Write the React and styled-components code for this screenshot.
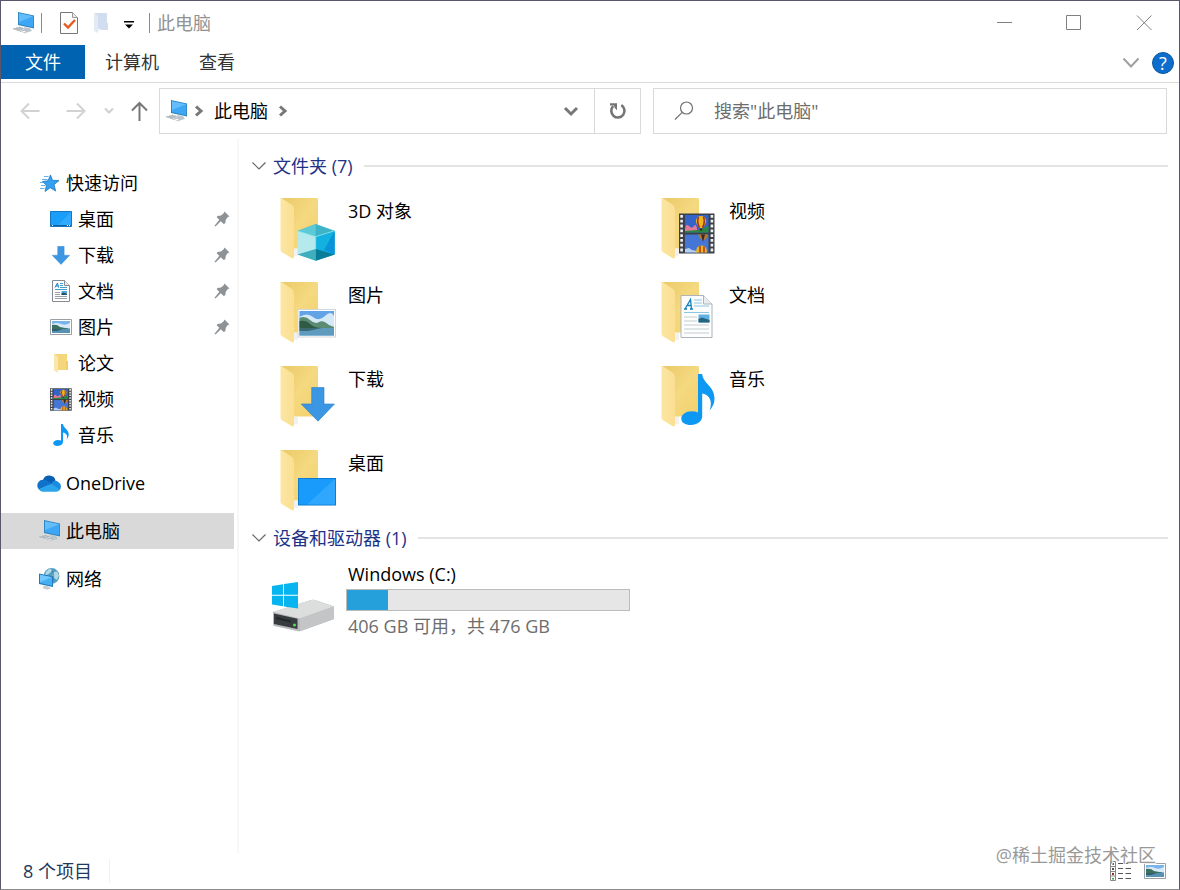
import React from "react";
import styled, { createGlobalStyle } from "styled-components";

const GlobalStyle = createGlobalStyle`
  *, *::before, *::after { box-sizing: border-box; }
  body {
    margin: 0;
    background: #fff;
    color: #000;
    font-family: "Open Sans", "Noto Sans CJK SC", sans-serif;
    font-size: 18px;
    line-height: 24px;
  }
  button, input { font: inherit; color: inherit; }
  svg { display: block; flex: none; }
`;

const Window = styled.div`
  position: relative;
  display: flex;
  flex-direction: column;
  min-height: 100vh;
  border: 1px solid #5b566c;
  border-bottom-color: #8a8a8a;
  background: #fff;
`;

const PlainButton = styled.button`
  display: flex;
  align-items: center;
  justify-content: center;
  padding: 0;
  border: 0;
  background: transparent;
`;

/* Title bar */
const TitleBar = styled.header`
  display: flex;
  align-items: center;
  height: 44px;
  padding-left: 10px;
`;
const TitleDivider = styled.span`
  width: 1px;
  height: 20px;
  background: #8c8c8c;
`;
const QuickDivider = styled(TitleDivider)`
  margin-left: 6px;
`;
const QuickTools = styled.div`
  display: flex;
  align-items: center;
  gap: 15px;
  margin: 0 15px 0 18px;
`;
const Title = styled.h1`
  flex: 1;
  margin: 0 0 0 7px;
  color: #929292;
  font-size: 18px;
  font-weight: 400;
`;
const CaptionButton = styled(PlainButton)`
  width: 70px;
  height: 44px;
`;

/* Ribbon tabs */
const Ribbon = styled.nav`
  display: flex;
  align-items: flex-start;
  height: 38px;
  border-bottom: 1px solid #dadbdc;
`;
const Tab = styled(PlainButton)`
  height: 34px;
  padding: 0 ${(p) => (p.$primary ? 24 : 20)}px;
  background: ${(p) => (p.$primary ? "#0063b1" : "transparent")};
  color: ${(p) => (p.$primary ? "#fff" : "#333")};
`;
const RibbonTools = styled.div`
  display: flex;
  align-items: center;
  gap: 12px;
  height: 36px;
  margin-left: auto;
  padding-right: 5px;
`;
const HelpButton = styled(PlainButton)`
  width: 22px;
  height: 22px;
  border: 1px solid #0a57a0;
  border-radius: 50%;
  background: #0c6dcd;
  color: #fff;
  line-height: 20px;
`;

/* Address row */
const AddressRow = styled.div`
  display: grid;
  grid-template-columns: 46px 46px 20px 40px minmax(0, 482fr) minmax(0, 526fr);
  height: 46px;
  margin: 5px 12px 0 6px;
`;
const AddressBox = styled.div`
  display: flex;
  border: 1px solid #d9d9d9;
`;
const Crumbs = styled.div`
  display: flex;
  flex: 1;
  align-items: center;
  padding-left: 4px;
`;
const Crumb = styled(PlainButton)`
  padding: 0 10px;
`;
const CrumbArrowWrap = styled.span`
  margin-left: 6px;
`;
const AddressButton = styled(PlainButton)`
  width: 46px;
  border-left: ${(p) => (p.$divided ? "1px solid #d9d9d9" : "0")};
`;
const SearchBox = styled.label`
  display: flex;
  align-items: center;
  gap: 20px;
  margin-left: 12px;
  padding-left: 20px;
  border: 1px solid #d9d9d9;
`;
const SearchInput = styled.input`
  flex: 1;
  min-width: 0;
  padding: 0;
  border: 0;
  outline: 0;
  background: transparent;
  &::placeholder { color: #6d6d6d; opacity: 1; }
`;

/* Body */
const Body = styled.div`
  display: flex;
  flex: 1;
  margin-top: 5px;
`;
const Sidebar = styled.nav`
  flex: none;
  width: 238px;
  padding: 26px 3px 0 0;
  border-right: 2px solid #f7f7f7;
`;
const NavGroup = styled.ul`
  margin: 0 0 12px;
  padding: 0;
  list-style: none;
`;
const NavRow = styled.a`
  display: flex;
  align-items: center;
  height: 36px;
  padding: 0 4px 0 ${(p) => (p.$child ? 48 : 36)}px;
  background: ${(p) => (p.$selected ? "#d9d9d9" : "transparent")};
  color: #000;
  text-decoration: none;
`;
const NavIcon = styled.span`
  display: flex;
  justify-content: center;
  width: 24px;
  margin-right: 5px;
`;
const NavLabel = styled.span`
  flex: 1;
`;

const Content = styled.main`
  flex: 1;
  min-width: 0;
  padding: 9px 11px 0 12px;
`;
const SectionHeader = styled.h2`
  display: flex;
  align-items: center;
  height: 36px;
  margin: 0;
  color: #1e3287;
  font-size: 18px;
  font-weight: 400;
  &::after {
    content: "";
    flex: 1;
    height: 2px;
    margin-left: 11px;
    background: #e4e4e4;
  }
`;
const Toggle = styled(PlainButton)`
  width: 16px;
  margin-right: 6px;
`;
const TileGrid = styled.div`
  display: grid;
  grid-template-columns: repeat(auto-fill, 381px);
  padding-left: 21px;
`;
const Tile = styled.a`
  display: flex;
  gap: 12px;
  height: 84px;
  padding-top: 12px;
  color: #000;
  text-decoration: none;
`;
const TileName = styled.span`
  padding-top: 3px;
`;
const DriveTile = styled.a`
  display: flex;
  gap: 10px;
  padding: 6px 0 0 21px;
  color: #000;
  text-decoration: none;
`;
const DriveInfo = styled.div`
  display: flex;
  flex-direction: column;
  gap: 3px;
  width: 284px;
`;
const DriveText = styled.span`
  padding-left: 2px;
  color: ${(p) => (p.$muted ? "#6d6d6d" : "#000")};
`;
const DriveArt = styled.span`
  padding-top: 20px;
`;
const Usage = styled.progress`
  display: block;
  width: 100%;
  height: 22px;
  border: 1px solid #bcbcbc;
  appearance: none;
  background: #e6e6e6;
  &::-webkit-progress-bar { background: #e6e6e6; }
  &::-webkit-progress-value { background: #26a0da; }
`;

/* Status bar */
const StatusBar = styled.footer`
  display: flex;
  align-items: center;
  height: 36px;
  padding: 0 13px 0 22px;
  color: #1e395b;
`;
const ItemCount = styled.span`
  padding-right: 17px;
  border-right: 1px solid #f0f0f0;
`;
const ViewButtons = styled.div`
  display: flex;
  gap: 12px;
  margin-left: auto;
`;
const Watermark = styled.span`
  position: absolute;
  right: 23px;
  bottom: 22px;
  color: #999;
  text-shadow: 1px 1px 1px #fff;
  pointer-events: none;
`;

/* Drawings */
const PcIcon = () => (
  <svg width="24" height="24" viewBox="0 0 24 24" aria-hidden="true">
    <path d="M7 1 23 4.500V17.500L7 14Z" fill="#2f86c0" />
    <path d="M8 2.300 22.200 5.300V16.200L8 13.100Z" fill="#3ea7f5" />
    <path d="M8 2.300 22.200 5.300 8 11Z" fill="#63bdfb" />
    <path d="M13 16 19 17.300 21 20 15 21.500 13.500 19Z" fill="#b9c4cb" />
    <path d="M1 17.500 9 15.800 17 18.500 9 21Z" fill="#e4e8ea" />
    <path d="M2 17.500 9 19.800M5 16.800 12 19.200M8 16.200 15 18.600M6 19 12 17M3 18.200 9 16.300M9 20.500 16 18.500" stroke="#a4afb5" strokeWidth=".8" fill="none" />
    <path d="M11 21.500 14 20.700 17 21.300 14 22.400Z" fill="#cbd2d6" />
  </svg>
);

const ScreenShapes = () => (
  <g>
    <path d="M26 30H64V57.500H26Z" fill="#0c7bd0" />
    <path d="M27 31H63V56.500H27Z" fill="#189bfb" />
    <path d="M63 31V56.500H35Z" fill="#3aacff" opacity=".7" />
  </g>
);
const ArrowShapes = () => (
  <path d="M39.700 23.500H52V40H62.500L46 57.200 29.200 40H39.700Z" fill="#3b96e4" stroke="#2c7cc7" strokeWidth=".6" />
);
const PictureShapes = () => (
  <g>
    <path d="M25.500 29H64V57.500H25.500Z" fill="#d3d7da" />
    <path d="M26.500 30H63V56.500H26.500Z" fill="#fff" />
    <path d="M27.500 31H62V55.500H27.500Z" fill="#62a2e6" />
    <path d="M27.500 37Q35 32 41 37T53 36T62 36V48H27.500Z" fill="#d5e8f6" />
    <path d="M27.500 38Q33 35.500 38 40T47 42T57 45L62 47V48H27.500Z" fill="#5b8b72" />
    <path d="M27.500 41Q34 40 38 44T50 48H27.500Z" fill="#2f5a44" />
    <path d="M27.500 48H62V55.500H27.500Z" fill="#5e9bbd" />
    <path d="M27.500 48H50L36 51H27.500Z" fill="#3b6a74" />
  </g>
);
const DocShapes = () => (
  <g>
    <path d="M28 15.500H50.500L59 24V57.500H28Z" fill="#fdfdfd" stroke="#aeb4b9" />
    <path d="M50.500 15.500V24H59" fill="#e9edf0" stroke="#aeb4b9" />
    <path d="M31 29H34M37 29H40M32 29 37.500 19.500 38.500 29M34 25.500H38" fill="none" stroke="#1380be" strokeWidth="1.300" />
    <path d="M41 20H49M41 23H49M41 26H56M31 32.500H56" stroke="#8cc6e4" />
    <path d="M31 37H44M31 41H44M31 45H56M31 49H56M31 53H56" stroke="#c3ccd1" />
    <path d="M45.500 34.500H56.500V42.500H45.500Z" fill="#62b1e5" />
    <path d="M45.500 39 49 37.500 56.500 40V42.500H45.500Z" fill="#26637c" />
  </g>
);
const Balloon = ({ x, y }) => (
  <g>
    <path d={`M${x - 5} ${y}a5 5 0 0 1 10 0q0 3-3.500 7h-3Q${x - 5} ${y + 3} ${x - 5} ${y}Z`} fill="#f2b51c" />
    <path d={`M${x - 2.5} ${y - 4}q-2 5 1 10.500M${x + 2.5} ${y - 4}q2 5-1 10.500`} stroke="#a3301c" strokeWidth="1.600" fill="none" />
    <path d={`M${x - 1.2} ${y + 7.500}h2.400v2h-2.400z`} fill="#372714" />
  </g>
);
const FilmShapes = () => (
  <g>
    <path d="M26 17.500H61.500V57.500H26Z" fill="#3d4047" />
    <path d="M28.600 19V57M58.900 19V57" stroke="#eff1f3" strokeWidth="2.600" strokeDasharray="2.800 2" />
    <path d="M32 19H55.500V36.500H32Z" fill="#3564c8" />
    <path d="M32 38.500H55.500V56.500H32Z" fill="#4576d6" />
    <path d="M32 33Q33 27 36 30T41 30 44 33V36H32Z" fill="#e27a9a" />
    <path d="M32 36.500V35L45 34 55.500 30V36.500Z" fill="#2b8642" />
    <path d="M32 56.500V53L36 52 39 54 44 55V56.500Z" fill="#b5cff3" />
    <Balloon x={48} y={25} />
    <path d="M45 38.500H55Q54 43 50 44.500 46 42 45 38.500Z" fill="#bd7720" />
    <path d="M48 38.500H52L50 46Z" fill="#322a2c" />
    <path d="M43 56.500Q43 49.500 48.500 49.500T54 56.500Z" fill="#f2b51c" />
    <path d="M47 56.500V50M51 56.500V50.500" stroke="#a3301c" strokeWidth="1.400" />
  </g>
);
const NoteShapes = () => (
  <path d="M45 10H49.200C49.500 19 61.500 22 61.500 34.500Q61.500 41 56.500 46.500 59.500 38 56 33.500 53.500 30 49.200 29.500V52C49.200 57.500 44 61 38 61 32 61 28.300 58.500 28.300 54.700 28.300 50.500 33 47.200 38.500 47.200Q43 47.200 45 48.500Z" fill="#0c98f3" />
);
const CubeShapes = () => (
  <g>
    <path d="M25.500 35 43.700 28 62.700 34.700 43.700 40.700Z" fill="#3db4c8" />
    <path d="M43.700 28V40.700L25.500 35Z" fill="#5cc9d6" />
    <path d="M25.500 35 43.700 40.700V64.700L25.500 58.500Z" fill="#b4e9ee" />
    <path d="M43.700 40.700 62.700 34.700V58.500L43.700 64.700Z" fill="#12b1e0" />
    <path d="M62.700 34.700V58.500L52 54Z" fill="#0a93d8" />
    <path d="M25.500 58.500 43.700 53V64.700Z" fill="#3eaebd" />
    <path d="M43.700 53 62.700 58.500 43.700 64.700Z" fill="#087d99" />
    <path d="M25.500 35 43.700 40.700 62.700 34.700M43.700 40.700V53" stroke="#8de6ef" strokeWidth=".7" fill="none" />
  </g>
);

const shapes = {
  cube: { Shapes: CubeShapes },
  film: { Shapes: FilmShapes, box: "26 17 36 41" },
  picture: { Shapes: PictureShapes },
  doc: { Shapes: DocShapes },
  arrow: { Shapes: ArrowShapes, box: "29 23 34 35" },
  note: { Shapes: NoteShapes, box: "28 10 34 51" },
  screen: { Shapes: ScreenShapes },
};

const SmallArt = ({ kind, width, height }) => {
  const { Shapes, box } = shapes[kind];
  return (
    <svg width={width} height={height} viewBox={box} preserveAspectRatio="none" aria-hidden="true">
      <Shapes />
    </svg>
  );
};
const SmallScreen = () => (
  <svg width="22" height="16" viewBox="0 0 22 16" aria-hidden="true">
    <path d="M.500.500H21.500V15.500H.500Z" fill="#1b9dfa" stroke="#1577c0" />
    <path d="M21 1V14H8Z" fill="#41b0ff" opacity=".6" />
    <path d="M1 14.500H21" stroke="#0f5f9e" />
    <path d="M2 14.500H3M17 14.500H18M19 14.500H20" stroke="#fff" />
  </svg>
);
const SmallDoc = () => (
  <svg width="18" height="22" viewBox="0 0 18 22" aria-hidden="true">
    <path d="M.500.500H12.500L17.500 5.500V21.500H.500Z" fill="#fff" stroke="#858b90" />
    <path d="M12.500.500V5.500H17.500" fill="#eee" stroke="#858b90" />
    <path d="M3 7.500 5.500 3 6.500 7.500M4 6H6.500" fill="none" stroke="#1380be" />
    <path d="M8 3.500H11M8 5.500H11M8 7.500H15M3 9.500H15" stroke="#3f9fd0" />
    <path d="M3 12.500H8M3 14.500H8M3 16.500H15M3 18.500H15" stroke="#9aa2a8" />
    <path d="M9.500 11H15V15H9.500Z" fill="#5aa9dc" />
    <path d="M9.500 13.500 11.500 12.500 15 14V15H9.500Z" fill="#1f4f6a" />
  </svg>
);
const SmallPicture = () => (
  <svg width="22" height="16" viewBox="0 0 22 16" aria-hidden="true">
    <path d="M.500.500H21.500V15.500H.500Z" fill="#fff" stroke="#9a9fa3" />
    <path d="M2 2H20V14H2Z" fill="#79b4ea" />
    <path d="M2 5Q7 3 11 5T20 4V9H2Z" fill="#d8eaf7" />
    <path d="M2 6Q7 5 10 8L18 9.500V10H2Z" fill="#3e7061" />
    <path d="M2 10H20V14H2Z" fill="#5792b4" />
    <path d="M2 10H13L7 12H2Z" fill="#2f5f6a" />
  </svg>
);

const FolderShapes = () => (
  <g>
    <path d="M9 2H45Q46 2 46 3V52.500H20Z" fill="url(#folderBack)" />
    <path d="M22 53H26V60H22Z" fill="#f1f1f1" />
    <path d="M8.500 2Q10 2 11 3L20 9Q22 10.500 22 13V61.500Q21 63 19.500 62L9.500 56Q8.500 55 8.500 54Z" fill="url(#folderFront)" />
  </g>
);
const FolderGradients = styled.svg`
  position: absolute;
`;
const FolderDefs = () => (
  <FolderGradients width="0" height="0" aria-hidden="true">
    <defs>
      <linearGradient id="folderBack" x1="0" y1="0" x2="1" y2="1">
        <stop offset="0" stopColor="#eac968" />
        <stop offset=".5" stopColor="#f5d980" />
        <stop offset="1" stopColor="#f2d16c" />
      </linearGradient>
      <linearGradient id="folderFront" x1="0" y1="0" x2="1" y2="0">
        <stop offset="0" stopColor="#fbe6a3" />
        <stop offset="1" stopColor="#fbdf92" />
      </linearGradient>
    </defs>
  </FolderGradients>
);
const FolderArt = ({ kind }) => {
  const { Shapes } = shapes[kind];
  return (
    <svg width="64" height="66" viewBox="0 0 64 66" aria-hidden="true">
      <FolderShapes />
      <Shapes />
    </svg>
  );
};
const SmallFolder = () => (
  <svg width="16" height="20" viewBox="0 0 16 20" aria-hidden="true">
    <path d="M1 1H14V17H4Z" fill="#f4d77c" />
    <path d="M13 8H15V17H13Z" fill="#f0cd68" />
    <path d="M1 1 5 4V20L1 17.500Z" fill="#fbe7aa" />
  </svg>
);

const StarIcon = () => (
  <svg width="24" height="20" viewBox="0 0 24 20" aria-hidden="true">
    <path d="M13.500 2 15.500 7.300 22 7.600 17 11.700 18.700 18 13.200 14.700 8 18.500 9.500 12.300 5.500 8.500 11 7.800Z" fill="#34a0ef" stroke="#1b78c3" strokeWidth=".8" />
    <path d="M7 3.500H11.500M5 6.500H10.500M3 9.500H6M4 12.500H8.500M3 15.500H7.500" stroke="#62b1ea" />
  </svg>
);
const CloudIcon = () => (
  <svg width="24" height="17" viewBox="0 0 24 17" aria-hidden="true">
    <path d="M6 5A6.500 6.500 0 0 1 18.500 5.500L14 11 5 9Z" fill="#0a5fb4" />
    <path d="M6.500 4.700A5.800 5.800 0 0 0 2 14.500L15 8.800 11 6.200Q9 4.700 6.500 4.700Z" fill="#0f73cc" />
    <path d="M14 9 16.500 6Q19 5 21 6.700 24 8.500 24 11.500 24 14 22 15.500Z" fill="#1a8be0" />
    <path d="M1.800 14.300 14.300 8.700 23 14.500Q21.500 16.800 19 16.800H5.500Q3 16.500 1.800 14.300Z" fill="#2ba4ea" />
  </svg>
);
const NetworkIcon = () => (
  <svg width="24" height="24" viewBox="0 0 24 24" aria-hidden="true">
    <circle cx="14.500" cy="9" r="7.900" fill="#4f9cc4" />
    <path d="M9 5Q12 1 15.500 1.700L14 5 11 7.500 8 8ZM17 5 20 4.500 22 8.500 20 13 17 11 15.500 8Z" fill="#b4d8e2" />
    <path d="M7 8Q10 13 8 15M14 1.300Q19 8 15 16.500" stroke="#3182ac" strokeWidth=".7" fill="none" />
    <path d="M2 6.500 16 9.500V20L2 17Z" fill="#2179b8" />
    <path d="M3 7.700 15 10.300V18.700L3 16Z" fill="#46aef3" />
    <path d="M3 7.700 15 10.300 3 15Z" fill="#73c8fc" />
    <path d="M7 18.500 11 19.300 14 21.500 10 22.800 5.500 21Z" fill="#c8ced2" />
  </svg>
);
const PinIcon = () => (
  <svg width="16" height="16" viewBox="0 0 16 16" aria-hidden="true">
    <path d="M10.500.500 15.500 5.500 13.800 6 11.800 8.800 11.300 12.300 9.700 13 6.800 10.200 1.500 15.500.500 14.800 5.300 8.800 2.700 6.200 3.500 5 7 4.400 9.700 2.200Z" fill="#8d9296" />
  </svg>
);
const DriveIcon = () => (
  <svg width="64" height="50" viewBox="0 0 64 50" aria-hidden="true">
    <path d="M1 30 39 18Q41 17.500 43 18L61 24Q62 24.500 62 26V37L29 49Q27 49.500 25 49L2 44Q1 43.500 1 42Z" fill="#b8babc" />
    <path d="M1 30 39 18Q41 17.500 43 18L61.500 24.500 28 36.500Z" fill="#dcdddd" />
    <path d="M28 36.500 62 24.500V37L28 49Z" fill="#c3c5c6" />
    <path d="M2 31.500 25.500 36.800V47L2 42Z" fill="#393c3e" />
    <path d="M4 35 19 38.500V40.500L4 37Z" fill="#20292b" />
    <circle cx="22.500" cy="43" r="1.500" fill="#58db58" />
    <path d="M0 4 11 2.300V12.800H0ZM12 2.100 26 0V12.800H12ZM0 13.800H11V24.300L0 22.600ZM12 13.800H26V26.500L12 24.500Z" fill="#06b5ef" />
  </svg>
);
const TaskIcon = () => (
  <svg width="18" height="22" viewBox="0 0 18 22" aria-hidden="true">
    <path d="M.500.500H12.500L17.500 5.500V21.500H.500Z" fill="#fdfdfd" stroke="#777" />
    <path d="M12.500.500V5.500H17.500" fill="#e9e9e9" stroke="#999" />
    <path d="M4 11.500 8 15.500 15 8" fill="none" stroke="#e65a1e" strokeWidth="2.400" />
  </svg>
);
const FaintFolderIcon = () => (
  <svg width="16" height="22" viewBox="0 0 16 22" aria-hidden="true">
    <path d="M2 1H14V11H15V18H4Z" fill="#d2deef" />
    <path d="M1 1 5 4V21L1 19Z" fill="#e3eaf5" />
    <path d="M5 17H8V19H5Z" fill="#f2f5fa" />
  </svg>
);
const StrokeIcon = ({ width, height, d, color, weight = 1 }) => (
  <svg width={width} height={height} viewBox={`0 0 ${width} ${height}`} aria-hidden="true">
    <path d={d} fill="none" stroke={color} strokeWidth={weight} />
  </svg>
);
const CustomizeIcon = () => (
  <svg width="10" height="12" viewBox="0 0 10 12" aria-hidden="true">
    <path d="M0 4H10V5.500H0ZM1 7.500H9L5 11.500Z" fill="#000" />
  </svg>
);
const RefreshIcon = () => (
  <svg width="18" height="18" viewBox="0 0 18 18" aria-hidden="true">
    <path d="M12.300 3.200A6.600 6.600 0 1 1 4.200 4.200" fill="none" stroke="#757575" strokeWidth="2.600" />
    <path d="M1 1.200H8V8.200L5.800 6 4.800 3.400 1 3.400Z" fill="#757575" />
  </svg>
);
const SearchIcon = () => (
  <svg width="20" height="20" viewBox="0 0 20 20" aria-hidden="true">
    <circle cx="12.500" cy="7" r="6" fill="none" stroke="#707070" strokeWidth="1.200" />
    <path d="M8.200 11.300 1 18.500" stroke="#707070" strokeWidth="1.200" />
  </svg>
);
const DetailsIcon = () => (
  <svg width="22" height="20" viewBox="0 0 22 20" aria-hidden="true">
    <path d="M.500.500H5.500V19.500H.500ZM.500 5.500H5.500M.500 10.500H5.500M.500 15H5.500" fill="#fff" stroke="#888" />
    <path d="M8 2.500H13M15.500 2.500H21M8 7.500H13M15.500 7.500H21M8 12.500H13M15.500 12.500H21M8 17.500H13M15.500 17.500H21" stroke="#555" />
    <path d="M2 2H4V4H2ZM2 7H4V9H2Z" fill="#555" />
    <path d="M2 12H4V14H2Z" fill="#a32525" />
    <path d="M2 17H4V18.500H2Z" fill="#4b9b3b" />
  </svg>
);
const ArrowHead = () => (
  <StrokeIcon width={10} height={12} d="M2 1.500 7 6 2 10.500" color="#777" weight={3} />
);

const quickItems = [
  { label: "桌面", icon: <SmallScreen />, pinned: true },
  { label: "下载", icon: <SmallArt kind="arrow" width={18} height={19} />, pinned: true },
  { label: "文档", icon: <SmallDoc />, pinned: true },
  { label: "图片", icon: <SmallPicture />, pinned: true },
  { label: "论文", icon: <SmallFolder /> },
  { label: "视频", icon: <SmallArt kind="film" width={22} height={23} /> },
  { label: "音乐", icon: <SmallArt kind="note" width={16} height={22} /> },
];
const roots = [
  { label: "OneDrive", icon: <CloudIcon /> },
  { label: "此电脑", icon: <PcIcon />, selected: true },
  { label: "网络", icon: <NetworkIcon /> },
];
const folders = [
  { label: "3D 对象", kind: "cube" },
  { label: "视频", kind: "film" },
  { label: "图片", kind: "picture" },
  { label: "文档", kind: "doc" },
  { label: "下载", kind: "arrow" },
  { label: "音乐", kind: "note" },
  { label: "桌面", kind: "screen" },
];

const NavItem = ({ label, icon, child, selected, pinned }) => (
  <li>
    <NavRow href="#" $child={child} $selected={selected} aria-current={selected ? "page" : undefined}>
      <NavIcon>{icon}</NavIcon>
      <NavLabel>{label}</NavLabel>
      {pinned && <PinIcon />}
    </NavRow>
  </li>
);

const Section = ({ title, children }) => (
  <section>
    <SectionHeader>
      <Toggle aria-label={`折叠 ${title}`}>
        <StrokeIcon width={16} height={10} d="M1.500 1.500 8 8 14.500 1.500" color="#666" weight={1.2} />
      </Toggle>
      {title}
    </SectionHeader>
    {children}
  </section>
);

export default function App() {
  return (
    <>
      <GlobalStyle />
      <Window>
        <FolderDefs />
        <TitleBar>
          <PcIcon />
          <QuickDivider />
          <QuickTools>
            <PlainButton aria-label="属性"><TaskIcon /></PlainButton>
            <PlainButton aria-label="新建文件夹"><FaintFolderIcon /></PlainButton>
            <PlainButton aria-label="自定义快速访问工具栏"><CustomizeIcon /></PlainButton>
          </QuickTools>
          <TitleDivider />
          <Title>此电脑</Title>
          <CaptionButton aria-label="最小化">
            <StrokeIcon width={16} height={16} d="M1 7.500H16" color="#808080" />
          </CaptionButton>
          <CaptionButton aria-label="最大化">
            <StrokeIcon width={16} height={16} d="M.5.5H14.500V14.500H.5Z" color="#808080" />
          </CaptionButton>
          <CaptionButton aria-label="关闭">
            <StrokeIcon width={16} height={16} d="M1 .5 15.500 15M15.500.5 1 15" color="#808080" />
          </CaptionButton>
        </TitleBar>

        <Ribbon aria-label="功能区">
          <Tab $primary>文件</Tab>
          <Tab>计算机</Tab>
          <Tab>查看</Tab>
          <RibbonTools>
            <PlainButton aria-label="展开功能区">
              <StrokeIcon width={18} height={12} d="M1.500 1.500 9 9.500 16.500 1.500" color="#a0a0a0" weight={2} />
            </PlainButton>
            <HelpButton aria-label="帮助">?</HelpButton>
          </RibbonTools>
        </Ribbon>

        <AddressRow>
          <PlainButton aria-label="后退">
            <StrokeIcon width={20} height={18} d="M9 1.500 1.500 9 9 16.500M1.500 9H19.500" color="#d2d2d2" weight={2} />
          </PlainButton>
          <PlainButton aria-label="前进">
            <StrokeIcon width={20} height={18} d="M11 1.500 18.500 9 11 16.500M18.500 9H.5" color="#d2d2d2" weight={2} />
          </PlainButton>
          <PlainButton aria-label="最近浏览的位置">
            <StrokeIcon width={10} height={8} d="M1 1.500 5 5.500 9 1.500" color="#cfcfcf" weight={2} />
          </PlainButton>
          <PlainButton aria-label="上移">
            <StrokeIcon width={18} height={20} d="M2 9.500 9.500 2 17 9.500M9.500 2V20" color="#777" weight={2} />
          </PlainButton>
          <AddressBox>
            <Crumbs>
              <PcIcon />
              <CrumbArrowWrap><ArrowHead /></CrumbArrowWrap>
              <Crumb>此电脑</Crumb>
              <ArrowHead />
            </Crumbs>
            <AddressButton aria-label="以前的位置">
              <StrokeIcon width={16} height={12} d="M2 3 8 9 14 3" color="#777" weight={3} />
            </AddressButton>
            <AddressButton $divided aria-label="刷新"><RefreshIcon /></AddressButton>
          </AddressBox>
          <SearchBox>
            <SearchIcon />
            <SearchInput type="text" aria-label="搜索" placeholder={'搜索"此电脑"'} />
          </SearchBox>
        </AddressRow>

        <Body>
          <Sidebar aria-label="导航窗格">
            <NavGroup>
              <NavItem label="快速访问" icon={<StarIcon />} />
              {quickItems.map((item) => <NavItem key={item.label} child {...item} />)}
            </NavGroup>
            {roots.map((item) => (
              <NavGroup key={item.label}><NavItem {...item} /></NavGroup>
            ))}
          </Sidebar>
          <Content>
            <Section title="文件夹 (7)">
              <TileGrid>
                {folders.map(({ label, kind }) => (
                  <Tile key={label} href="#">
                    <FolderArt kind={kind} />
                    <TileName>{label}</TileName>
                  </Tile>
                ))}
              </TileGrid>
            </Section>
            <Section title="设备和驱动器 (1)">
              <DriveTile href="#">
                <DriveArt><DriveIcon /></DriveArt>
                <DriveInfo>
                  <DriveText>Windows (C:)</DriveText>
                  <Usage value={70} max={476} aria-label="已用空间" />
                  <DriveText $muted>406 GB 可用，共 476 GB</DriveText>
                </DriveInfo>
              </DriveTile>
            </Section>
          </Content>
        </Body>

        <StatusBar>
          <ItemCount>8 个项目</ItemCount>
          <ViewButtons>
            <PlainButton aria-label="详细信息"><DetailsIcon /></PlainButton>
            <PlainButton aria-label="大图标"><SmallPicture /></PlainButton>
          </ViewButtons>
        </StatusBar>
        <Watermark>@稀土掘金技术社区</Watermark>
      </Window>
    </>
  );
}
